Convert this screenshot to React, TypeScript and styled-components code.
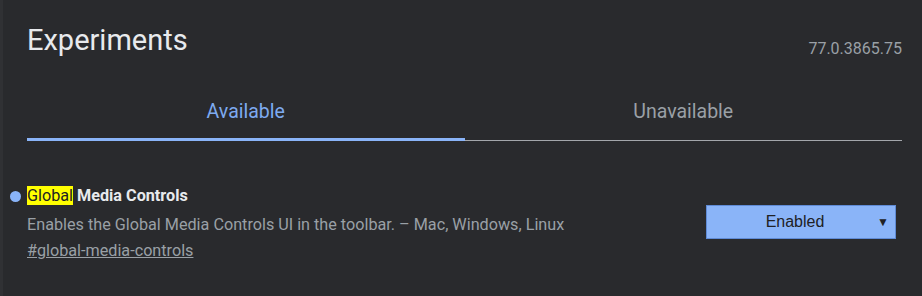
import React from "react";
import styled, { createGlobalStyle } from "styled-components";

const GlobalStyle = createGlobalStyle`
  html, body {
    margin: 0;
    padding: 0;
    background: #292a2d;
  }
  body {
    font-family: Roboto, "Liberation Sans", sans-serif;
  }
`;

const Page = styled.div`
  box-sizing: border-box;
  width: 922px;
  height: 296px;
  background: #292a2d;
  border-left: 3px solid #303134;
  padding: 0 20px 0 24px;
  overflow: hidden;
`;

const Header = styled.header`
  display: flex;
  justify-content: space-between;
  align-items: flex-start;
  padding-top: 23px;
  height: 75px;
  box-sizing: border-box;
`;

const Title = styled.h1`
  margin: 0;
  font-size: 29px;
  line-height: 34px;
  font-weight: 400;
  color: #e8eaed;
`;

const Version = styled.span`
  margin-top: 18px;
  font-size: 16px;
  line-height: 16px;
  color: #9aa0a6;
`;

const Tabs = styled.nav`
  display: flex;
  border-bottom: 1px solid #a3a6ab;
`;

const Tab = styled.div<{ $active?: boolean }>`
  flex: 1;
  text-align: center;
  font-size: 19.5px;
  line-height: 24px;
  padding: 25px 0 14px;
  margin-bottom: -1px;
  color: ${(p) => (p.$active ? "#7eaaf0" : "#9aa0a6")};
  border-bottom: 3px solid ${(p) => (p.$active ? "#8ab4f8" : "transparent")};
`;

const Experiment = styled.section`
  display: flex;
  align-items: flex-start;
  margin-top: 45px;
  margin-left: -17px;
  margin-right: 6px;
`;

const Bullet = styled.span`
  flex: none;
  width: 11px;
  height: 11px;
  border-radius: 50%;
  background: #8ab4f8;
  margin-right: 6px;
  margin-top: 5px;
`;

const Info = styled.div`
  flex: 1;
`;

const Name = styled.h2`
  margin: 0 0 7px;
  font-size: 16.2px;
  line-height: 20px;
  font-weight: 700;
  color: #e8eaed;
`;

const Mark = styled.mark`
  background: #ffff00;
  color: #202124;
  font-weight: 400;
`;

const Desc = styled.p`
  margin: 0;
  font-size: 16.2px;
  line-height: 24px;
  color: #9aa0a6;
`;

const Link = styled.a`
  display: block;
  margin-top: 2px;
  font-size: 16.2px;
  line-height: 24px;
  color: #9aa0a6;
  text-decoration: underline;
`;

const Select = styled.div`
  box-sizing: border-box;
  width: 190px;
  height: 34px;
  display: flex;
  align-items: center;
  background: #8ab4f8;
  border: 1px solid #5f8bd6;
  font-family: "Liberation Sans", Arial, sans-serif;
  font-size: 16px;
  color: #202124;
  margin-top: 19px;
`;

const SelectLabel = styled.span`
  flex: 1;
  text-align: center;
  padding-left: 14px;
`;

const Arrow = styled.span`
  font-size: 12px;
  width: 20px;
  margin-right: 6px;
  text-align: right;
`;

export default function App() {
  return (
    <>
      <GlobalStyle />
      <Page>
        <Header>
          <Title>Experiments</Title>
          <Version>77.0.3865.75</Version>
        </Header>
        <Tabs>
          <Tab $active>Available</Tab>
          <Tab>Unavailable</Tab>
        </Tabs>
        <Experiment>
          <Bullet />
          <Info>
            <Name>
              <Mark>Global</Mark> Media Controls
            </Name>
            <Desc>Enables the Global Media Controls UI in the toolbar. – Mac, Windows, Linux</Desc>
            <Link href="#global-media-controls">#global-media-controls</Link>
          </Info>
          <Select>
            <SelectLabel>Enabled</SelectLabel>
            <Arrow>▼</Arrow>
          </Select>
        </Experiment>
      </Page>
    </>
  );
}
